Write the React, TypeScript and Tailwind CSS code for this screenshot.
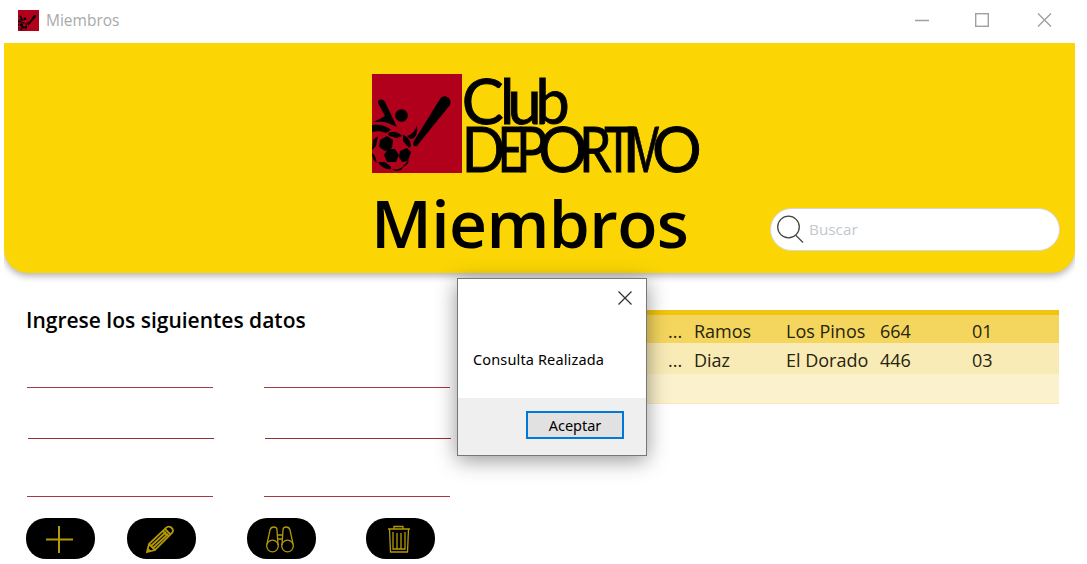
import type { ReactNode } from 'react';

type Letter = { ch: string; x: number; sx: number };

const clubLetters: Letter[] = [
  { ch: 'C', x: 461.8, sx: 1.03 },
  { ch: 'l', x: 500, sx: 1 },
  { ch: 'u', x: 507.5, sx: 1 },
  { ch: 'b', x: 535.5, sx: 1 },
];

const deportivoLetters: Letter[] = [
  { ch: 'D', x: 461.8, sx: 0.92 },
  { ch: 'E', x: 498, sx: 0.71 },
  { ch: 'P', x: 516.3, sx: 0.83 },
  { ch: 'O', x: 538, sx: 1 },
  { ch: 'R', x: 579.3, sx: 0.83 },
  { ch: 'T', x: 604.3, sx: 0.78 },
  { ch: 'I', x: 622.4, sx: 1 },
  { ch: 'V', x: 632.5, sx: 0.63 },
  { ch: 'O', x: 652, sx: 1 },
];

function Emblem() {
  return (
    <>
      <rect width="90" height="99" fill="#b1001c" />
      <path d="M6 29c-1-4 5-5 7-1l12 25-9-4c-5-2-10-1-14-1 5-3 8-4 11-6z" />
      <circle cx="29.500" cy="41.500" r="6.300" />
      <path d="M0 51c8-1 15 1 19 5l-5 3C9 57 5 57 0 58z" />
      <path d="M68 25c4-6 13-1 10 6L48 68l-3 4c-3 1-5-1-3-5z" />
      <path d="M45 52c1 7-1 13-7 13l-3-3c6-2 8-6 10-10z" />
      <path d="m8 66 7-4 6 4-1 8-7 3-6-4zM16 59c5-2 11-1 14 3l-5 2-8-2zM31 61c5 2 8 6 8 11l-2 2-6-7zM12 81l4-6h7l4 6-3 7h-9zM28 77l7-3 4 4-3 9-6 1-3-5zM1 66l5-4-2 10-4 4zM0 79l3 3 2 7C2 87 0 84 0 79zM6 88l7 0 6 5v2c-5 1-10-2-13-7zM20 95c5 1 8 0 12-3l-3 4c-4 2-7 1-9-1zM31 92l6-6c-1 4-3 6-6 7z" />
    </>
  );
}

function Wordmark({ letters, y, size }: { letters: Letter[]; y: number; size: number }) {
  return (
    <g fontFamily="Lato, sans-serif" fontSize={size} stroke="#000" strokeWidth="0.9">
      {letters.map((l, i) => (
        <text key={i} transform={`translate(${l.x - 372} ${y - 74}) scale(${l.sx} 1)`}>
          {l.ch}
        </text>
      ))}
    </g>
  );
}

function PillButton({ label, children }: { label: string; children: ReactNode }) {
  return (
    <button aria-label={label} className="flex h-[41px] w-[69px] items-center justify-center rounded-[20px] bg-black pr-[3px]">
      <svg width="28" height="28" viewBox="0 0 28 28" fill="none" stroke="#b39807" strokeWidth="1.3">
        {children}
      </svg>
    </button>
  );
}

function Line({ shifted = false }: { shifted?: boolean }) {
  return <div className={shifted ? 'ml-[1px] h-px w-[186px] bg-[#992d31]' : 'h-px w-[186px] bg-[#a63a3e]'} />;
}

const rows = [
  { dots: '...', name: 'Ramos', place: 'Los Pinos', num: '664', id: '01', cls: 'h-[28px] bg-[#f4d65e]' },
  { dots: '...', name: 'Diaz', place: 'El Dorado', num: '446', id: '03', cls: 'h-[31px] bg-[#f9ebb5]' },
];

export default function App() {
  return (
    <div className="relative h-[564px] w-[1087px] overflow-hidden bg-white font-['Noto_Sans','Open_Sans',sans-serif] text-black">
      <div className="flex h-[43px] items-center pl-[18px]">
        <svg width="21" height="21" viewBox="0 0 90 99" preserveAspectRatio="none" className="mt-[-2px]">
          <Emblem />
        </svg>
        <span className="mt-[-2px] ml-[7px] grow font-['Open_Sans'] text-[15.500px] text-[#a9a9a9]">Miembros</span>
        <svg width="140" height="16" viewBox="0 0 140 16" fill="none" stroke="#a0a0a0" strokeWidth="1.4" className="mt-[-3px] mr-[34px]">
          <path d="M2 8.500h14M125 1.500l13 13M138 1.500l-13 13" />
          <rect x="62.700" y="1.700" width="12.600" height="12.600" />
        </svg>
      </div>

      <div className="ml-[4px] h-[250px] w-[1071px] overflow-hidden">
        <header className="flex h-[230px] rounded-b-[24px] bg-[#fbd604] shadow-[0_3px_7px_rgba(0,0,0,0.3)]">
          <div className="w-[394px] pt-[31px] pl-[368px]">
            <svg width="330" height="100" viewBox="0 0 330 100" className="block overflow-visible">
              <Emblem />
              <Wordmark letters={clubLetters} y={123.5} size={61} />
              <Wordmark letters={deportivoLetters} y={171.5} size={62} />
            </svg>
            <h1 className="mt-[3px] ml-[-1px] font-['Open_Sans'] text-[66px] leading-[90px] font-semibold tracking-[-0.6px] whitespace-nowrap">Miembros</h1>
          </div>
          <div className="mt-[165px] ml-[372px] flex h-[43px] w-[290px] items-center rounded-full border border-[#d5d5d5] bg-white pl-[6px]">
            <svg width="28" height="28" viewBox="0 0 28 28" fill="none" stroke="#444" strokeWidth="1.300" className="mt-[-2px]">
              <circle cx="11.500" cy="12" r="10.800" />
              <path d="m18.500 20 7.500 7.500" />
            </svg>
            <span className="mt-[-1px] ml-[4px] font-['Open_Sans'] text-[15.300px] text-[#c3c7d0]">Buscar</span>
          </div>
        </header>
      </div>

      <main className="flex">
        <section className="w-[457px] pl-[26px]">
          <h2 className="mt-[12px] font-['Open_Sans'] text-[21px] leading-[30px] font-semibold whitespace-nowrap">Ingrese los siguientes datos</h2>
          <div className="mt-[52px] ml-[1px] flex gap-[51px]"><Line /><Line /></div>
          <div className="mt-[50px] ml-[1px] flex gap-[50px]"><Line shifted /><Line shifted /></div>
          <div className="mt-[57px] ml-[1px] flex gap-[51px]"><Line /><Line /></div>
          <div className="mt-[21px] flex">
            <PillButton label="Agregar"><path strokeWidth="2" d="M14 1v27M1 14.500h27" /></PillButton>
            <div className="ml-[31.500px]">
              <PillButton label="Editar">
                <path strokeWidth="1.800" d="m1 27 2-8L20 3c3-4 9 1 6 5L9 25zM3 19l6 6M19 4l6 6M17 6l6 6M5 21 20 7M7 23 22 9M1 27l3-1-2-2z" />
              </PillButton>
            </div>
            <div className="ml-[51px]">
              <PillButton label="Consultar">
                <circle cx="6.500" cy="21" r="5.800" /><circle cx="21.500" cy="21" r="5.800" />
                <path d="M1 19 4 5c1-4 7-4 7 0l1 15M27 19 24 5c-1-4-7-4-7 0l-1 15M11.500 10h5M12 14h4" />
              </PillButton>
            </div>
            <div className="ml-[50px]">
              <PillButton label="Eliminar">
                <path d="M3 4h22M9 3.500V1.500h9v2M4.500 4l1 23h17l1-23M8 7v17h12V7M12 8v16M16 8v16" />
              </PillButton>
            </div>
          </div>
        </section>
        <section className="mt-[16.500px] w-[602px]">
          <div className="h-[5.500px] bg-[#f0c40f]" />
          {rows.map((r) => (
            <div key={r.id} className={`flex items-center pt-[4px] pl-[211px] font-['Open_Sans'] text-[18px] whitespace-nowrap text-[#26240f] ${r.cls}`}>
              <span className="w-[26px]">{r.dots}</span>
              <span className="w-[92px]">{r.name}</span>
              <span className="w-[94px]">{r.place}</span>
              <span className="w-[92px]">{r.num}</span>
              <span>{r.id}</span>
            </div>
          ))}
          <div className="h-[29.500px] border-b border-[#faebb4] bg-[#fbf1cc]" />
        </section>
      </main>

      <div role="dialog" className="absolute top-[278px] left-[457px] flex h-[178px] w-[190px] flex-col border-[1.500px] border-[#777] bg-white shadow-[0_4px_20px_rgba(0,0,0,0.42)]">
        <svg width="14" height="14" viewBox="0 0 14 14" stroke="#333" strokeWidth="1.300" className="mt-[12px] ml-[160px]">
          <path d="m.5.500 13 13M13.500.500l-13 13" />
        </svg>
        <p className="mt-[43px] ml-[15px] text-[14.500px] leading-[22px] tracking-[0.14px] whitespace-nowrap">Consulta Realizada</p>
        <div className="mt-auto flex h-[57px] items-start justify-end bg-[#efefef] pt-[13px] pr-[22px]">
          <button className="flex h-[28px] w-[98px] items-center justify-center border-2 border-[#0078d7] bg-[#e1e1e1] pt-[2px] text-[14.500px]">Aceptar</button>
        </div>
      </div>
    </div>
  );
}
